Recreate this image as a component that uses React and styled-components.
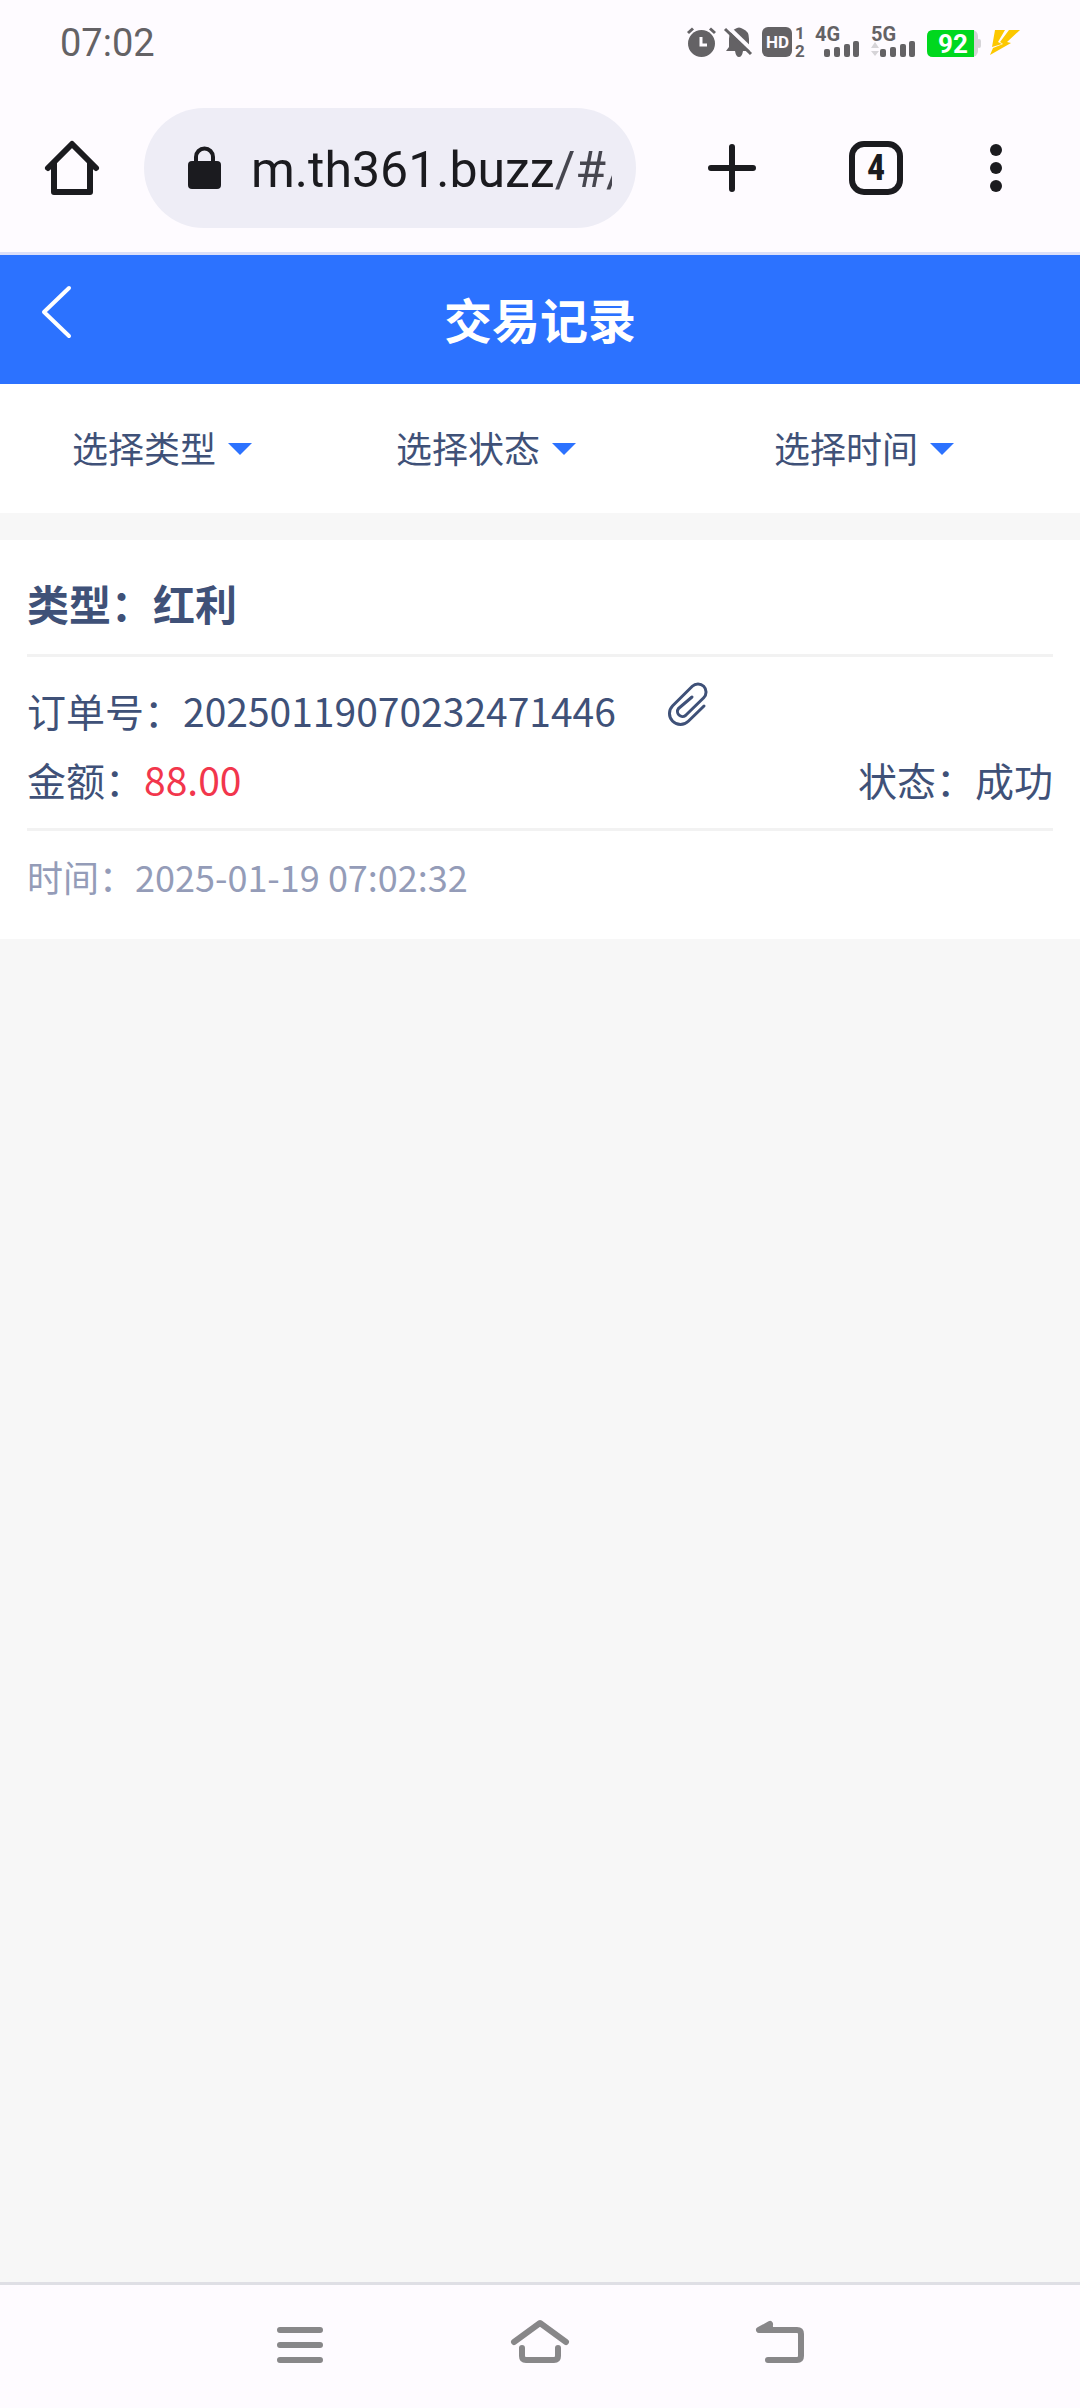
import React from "react";
import styled, { createGlobalStyle } from "styled-components";

const GlobalStyle = createGlobalStyle`
    * {
        box-sizing: border-box;
    }

    body {
        margin: 0;
        background: #f7f7f7;
        color: #3f5178;
        font-family: "Noto Sans CJK SC", sans-serif;
    }

    button {
        padding: 0;
        border: 0;
        background: none;
        color: inherit;
        font: inherit;
    }

    svg {
        display: block;
        flex: none;
        overflow: visible;
    }
`

const Page = styled.div`
    display: flex;
    flex-direction: column;
    min-height: 100vh;
`

const StatusBar = styled.div`
    display: flex;
    justify-content: space-between;
    align-items: center;
    height: 84px;
    padding: 0 60px;
    background: #fefbff;
    color: #646265;
    font-family: Roboto, sans-serif;
`

const Clock = styled.time`
    padding-top: 2px;
    font-size: 38px;
    line-height: 48px;
`

const StatusIcons = styled.div`
    display: flex;
    align-items: center;
    gap: 9px;
`

const Toolbar = styled.div`
    display: flex;
    align-items: center;
    padding: 24px 36px 24px 0;
    border-bottom: 3px solid #dcdff8;
    background: #fefbff;
    color: #1b1b1f;
    font-family: Roboto, sans-serif;
`

const ToolButton = styled.button`
    display: flex;
    align-items: center;
    justify-content: center;
    width: ${props => props.$width}px;
    height: 120px;
`

const AddressBar = styled.div`
    display: flex;
    flex: 1;
    align-items: center;
    gap: 30px;
    min-width: 0;
    height: 120px;
    margin-right: 24px;
    padding: 0 24px 0 44px;
    border-radius: 60px;
    background: #eeedf6;
`

const Url = styled.span`
    flex: 1;
    overflow: hidden;
    padding-top: 4px;
    font-size: 50px;
    line-height: 72px;
    white-space: nowrap;
`

const UrlPath = styled.span`
    color: #46464f;
`

const TabCount = styled.span`
    display: flex;
    align-items: center;
    justify-content: center;
    width: 54px;
    height: 54px;
    border: 6px solid #1b1b1f;
    border-radius: 15px;
    font-family: "Roboto Condensed", "Liberation Sans Narrow", Roboto, sans-serif;
    font-size: 36px;
    font-weight: bold;
    line-height: 42px;
`

const Header = styled.header`
    display: grid;
    grid-template-columns: 1fr auto 1fr;
    align-items: center;
    height: 129px;
    background: #2c72ff;
    color: #fff;
`

const BackButton = styled.button`
    justify-self: start;
    padding: 0 42px 15px;
`

const Title = styled.h1`
    margin: 0;
    padding-bottom: 4px;
    font-size: 48px;
    font-weight: bold;
    line-height: 72px;
`

const Filters = styled.div`
    display: grid;
    grid-template-columns: 3fr 3fr 4fr;
    height: 129px;
    margin-bottom: 27px;
    background: #fff;
    font-size: 36px;
    line-height: 54px;
`

const Filter = styled.button`
    display: flex;
    align-items: center;
    justify-content: center;
    gap: 12px;
`

const FilterName = styled.span`
    padding-bottom: 3px;
`

const Arrow = styled.span`
    border: 12px solid transparent;
    border-top-color: #2c72ff;
    border-bottom: 0;
`

const Card = styled.article`
    padding: 0 27px;
    background: #fff;
`

const Kind = styled.h2`
    margin: 0;
    padding: 33px 0 21px;
    border-bottom: 3px solid #f2f2f2;
    font-size: 42px;
    font-weight: bold;
    line-height: 60px;
`

const Details = styled.div`
    padding: 19px 0 14px;
    border-bottom: 3px solid #f2f2f2;
    font-size: 39px;
    line-height: 69px;
`

const Row = styled.div`
    display: flex;
    justify-content: ${props => props.$spread ? "space-between" : "flex-start"};
    height: 69px;
`

const CopyButton = styled.button`
    align-self: flex-start;
    margin: 6px 0 0 51px;
`

const Amount = styled.span`
    color: #f2364c;
`

const Time = styled.p`
    margin: 0;
    padding: 18px 0 36px;
    color: #949cb8;
    font-size: 36px;
    line-height: 54px;
`

const NavBar = styled.nav`
    display: grid;
    grid-template-columns: 1fr 1fr 1fr;
    height: 126px;
    margin-top: auto;
    padding: 0 calc(100% / 6) 3px;
    border-top: 3px solid #dfdfe5;
    background: #fefbff;
    color: #888789;
`

const NavButton = styled.button`
    display: flex;
    align-items: center;
    justify-content: center;
`

const Stroke = ({ size, width = 6, children }) => (
    <svg width={size[0]} height={size[1]} viewBox={`0 0 ${size[0]} ${size[1]}`} fill="none" stroke="currentColor"
        strokeWidth={width} strokeLinecap="round" strokeLinejoin="round" aria-hidden="true">
        {children}
    </svg>
)

const AlarmIcon = () => (
    <svg width="29" height="30" viewBox="0 0 29 30" fill="none" aria-hidden="true">
        <circle cx="14.500" cy="16.500" r="13.500" fill="currentColor"/>
        <path d="M1 6 6 1.500M28 6 23 1.500" stroke="currentColor" strokeWidth="3"/>
        <path d="M14 10v8h6" stroke="#fefbff" strokeWidth="3"/>
    </svg>
)

const MutedIcon = () => (
    <svg width="28" height="30" viewBox="0 0 28 30" fill="none" aria-hidden="true">
        <path d="M1 24 4 20V12Q4 4 10 2Q14-1 18 2Q24 4 24 12V20L27 24H18Q17 30 14 30Q11 30 10 24Z" fill="currentColor"/>
        <path d="M2-1 29 25" stroke="#fefbff" strokeWidth="4"/>
        <path d="M0 2 26 27" stroke="currentColor" strokeWidth="3"/>
    </svg>
)

const HdIcon = () => (
    <svg width="44" height="30" viewBox="0 0 44 30" fontFamily="Roboto, sans-serif" fontWeight="bold" aria-hidden="true">
        <rect width="30" height="30" rx="6" fill="currentColor"/>
        <text x="4" y="21" fontSize="17" fill="#fefbff">HD</text>
        <text x="33" y="12" fontSize="17" fill="currentColor">1</text>
        <text x="33" y="30" fontSize="17" fill="currentColor">2</text>
    </svg>
)

const SignalIcon = ({ label, arrows }) => (
    <svg width="47" height="30" viewBox="0 0 47 30" fill="currentColor" fontFamily="Roboto, sans-serif" aria-hidden="true">
        <text y="14" fontSize="20" fontWeight="bold">{label}</text>
        {arrows && <path d="M0 21h8L4 15ZM0 24h8L4 29Z" fill="#d6d4d8"/>}
        <rect x="9" y="22" width="6" height="8" rx="2"/>
        <rect x="19" y="20" width="6" height="10" rx="2"/>
        <rect x="29" y="17" width="6" height="13" rx="2"/>
        <rect x="38" y="14" width="6" height="16" rx="2"/>
    </svg>
)

const BatteryIcon = () => (
    <svg width="54" height="30" viewBox="0 -3 54 30" aria-hidden="true">
        <rect width="51" height="27" rx="6" fill="#d6d4d8"/>
        <rect x="50" y="9" width="4" height="9" rx="2" fill="#d6d4d8"/>
        <path d="M6 0H47V27H6Q0 27 0 21V6Q0 0 6 0Z" fill="#00d81e"/>
        <text x="11" y="23" fill="#fff" fontFamily="Roboto, sans-serif" fontSize="26" fontWeight="bold">92</text>
    </svg>
)

const BoltIcon = () => (
    <svg width="30" height="30" viewBox="0 -3 30 30" fill="#fcc800" aria-hidden="true">
        <path d="M5 0H15L8 12L12 14L2 17Z"/>
        <path d="M19 0H30L17 12L21 13L0 25L3 18L13 14L10 12Z"/>
    </svg>
)

const HomeIcon = () => (
    <Stroke size={[54, 54]}>
        <path d="M3 27 27 3 51 27M9 22V51H45V22"/>
    </Stroke>
)

const LockIcon = () => (
    <svg width="33" height="42" viewBox="0 0 33 42" aria-hidden="true">
        <rect y="14" width="33" height="28" rx="4" fill="currentColor"/>
        <path d="M8 16V10A8.500 8.500 0 0 1 25 10V16" fill="none" stroke="currentColor" strokeWidth="4"/>
    </svg>
)

const MoreIcon = () => (
    <svg width="12" height="48" viewBox="0 0 12 48" fill="currentColor" aria-hidden="true">
        <circle cx="6" cy="6" r="6"/>
        <circle cx="6" cy="24" r="6"/>
        <circle cx="6" cy="42" r="6"/>
    </svg>
)

const ClipIcon = () => (
    <Stroke size={[42, 46]} width={3}>
        <path d="M37 24 21.300 39.300A11 11 0 0 1 5.700 23.700L25.300 4.300A8 8 0 0 1 36.700 15.700L18.500 33.500A5 5 0 0 1 11.500 26.500L25 15"/>
    </Stroke>
)

const filters = ["选择类型", "选择状态", "选择时间"]

const App = () => (
    <Page>
        <GlobalStyle/>

        <StatusBar>
            <Clock>07:02</Clock>
            <StatusIcons>
                <AlarmIcon/>
                <MutedIcon/>
                <HdIcon/>
                <SignalIcon label="4G"/>
                <SignalIcon label="5G" arrows/>
                <BatteryIcon/>
                <BoltIcon/>
            </StatusIcons>
        </StatusBar>

        <Toolbar>
            <ToolButton $width={144} aria-label="主页"><HomeIcon/></ToolButton>
            <AddressBar>
                <LockIcon/>
                <Url>m.th361.buzz<UrlPath>/#/</UrlPath></Url>
            </AddressBar>
            <ToolButton $width={144} aria-label="新标签页">
                <Stroke size={[48, 48]}><path d="M24 3V45M3 24H45"/></Stroke>
            </ToolButton>
            <ToolButton $width={144} aria-label="标签页"><TabCount>4</TabCount></ToolButton>
            <ToolButton $width={96} aria-label="更多"><MoreIcon/></ToolButton>
        </Toolbar>

        <Header>
            <BackButton aria-label="返回">
                <Stroke size={[30, 52]} width={4}><path d="M27 2 2 26 27 50"/></Stroke>
            </BackButton>
            <Title>交易记录</Title>
        </Header>

        <Filters>
            {filters.map(name => (
                <Filter key={name}>
                    <FilterName>{name}</FilterName>
                    <Arrow/>
                </Filter>
            ))}
        </Filters>

        <Card>
            <Kind>类型：红利</Kind>
            <Details>
                <Row>
                    <span>订单号：20250119070232471446</span>
                    <CopyButton aria-label="复制"><ClipIcon/></CopyButton>
                </Row>
                <Row $spread>
                    <span>金额：<Amount>88.00</Amount></span>
                    <span>状态：成功</span>
                </Row>
            </Details>
            <Time>时间：2025-01-19 07:02:32</Time>
        </Card>

        <NavBar>
            <NavButton aria-label="菜单">
                <Stroke size={[46, 36]}><path d="M3 3H43M3 18H43M3 33H43"/></Stroke>
            </NavButton>
            <NavButton aria-label="桌面">
                <Stroke size={[58, 50]}><path d="M3 22 29 3 55 22M11 28V36Q11 40 15 40H43Q47 40 47 36V28"/></Stroke>
            </NavButton>
            <NavButton aria-label="后退">
                <Stroke size={[48, 50]}><path d="M14 4 3 10H41Q45 10 45 14V36Q45 40 41 40H12M3 10 14 6"/></Stroke>
            </NavButton>
        </NavBar>
    </Page>
)

export default App;
